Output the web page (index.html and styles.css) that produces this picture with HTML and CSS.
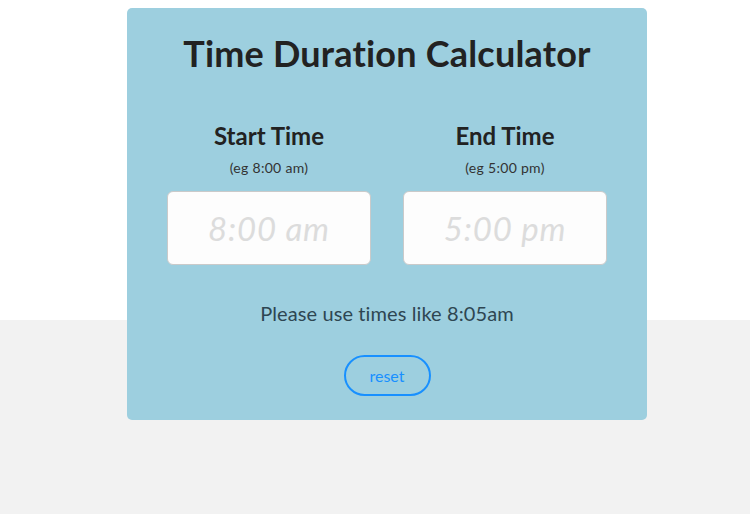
FILE: index.html
```html
<!DOCTYPE html>
<html lang="en">
<head>
  <meta charset="UTF-8">
  <meta name="viewport" content="width=device-width, initial-scale=1.0">
  <title>Time Duration Calculator</title>
  <link rel="stylesheet" href="styles.css">
</head>
<body>

<div id="calculator">
  <h1>Time Duration Calculator</h1>

  <div id="time-fields">
    <div class="field">
      <h2>Start Time</h2>
      <p class="hint">(eg 8:00 am)</p>
      <input type="text" class="time-input" placeholder="8:00 am">
    </div>
    <div class="field">
      <h2>End Time</h2>
      <p class="hint">(eg 5:00 pm)</p>
      <input type="text" class="time-input" placeholder="5:00 pm">
    </div>
  </div>

  <p id="result">Please use times like 8:05am</p>
  <button id="reset">reset</button>
</div>

</body>
</html>
```

FILE: styles.css
```css
body {
  font-family: Lato, "Open Sans", sans-serif;
  margin: 0;
  padding: 8px 0 0;
  min-height: 514px;
  box-sizing: border-box;
  background: linear-gradient(#fff 0, #fff 320px, #f2f2f2 320px);
}

#calculator {
  width: 520px;
  margin: 0 0 0 127px;
  padding: 25px 40px 24px;
  box-sizing: border-box;
  background-color: #9dcfdf;
  border-radius: 5px;
  text-align: center;
}

h1 {
  margin: 0;
  font-size: 36px;
  line-height: 40px;
  font-weight: 700;
  color: #222;
  letter-spacing: 0.2px;
}

#time-fields {
  display: flex;
  gap: 32px;
  margin-top: 49px;
}

.field {
  flex: 1;
}

h2 {
  margin: 0;
  font-size: 24px;
  line-height: 28px;
  font-weight: 700;
  color: #222;
}

.hint {
  margin: 9px 0 0;
  font-size: 14px;
  line-height: 18px;
  color: #333;
  letter-spacing: 0.3px;
}

.time-input {
  display: block;
  width: 100%;
  height: 74px;
  margin-top: 14px;
  box-sizing: border-box;
  border: 1px solid #cacaca;
  border-radius: 6px;
  background: #fdfdfd;
  font-family: inherit;
  font-size: 33px;
  font-style: italic;
  text-align: center;
  color: #333;
  letter-spacing: 0.8px;
}

.time-input::placeholder {
  color: #dcdcdc;
}

#result {
  margin: 36px 0 0;
  font-size: 20px;
  line-height: 24px;
  color: #2e4652;
  letter-spacing: 0.1px;
}

#reset {
  display: block;
  margin: 30px auto 0;
  width: 87px;
  height: 41px;
  border: 2px solid #1890ff;
  border-radius: 21px;
  background: transparent;
  font-family: inherit;
  font-size: 16px;
  color: #1890ff;
}
```
